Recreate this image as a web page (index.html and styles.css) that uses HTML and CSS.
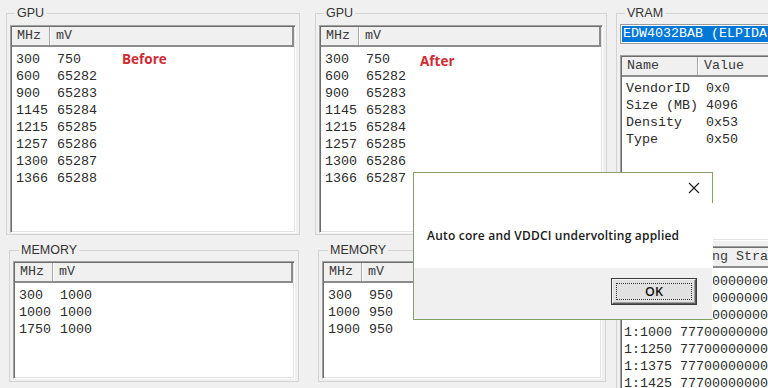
FILE: index.html
```html
<!DOCTYPE html>
<html lang="en">
<head>
<meta charset="utf-8">
<title>Voltage tables</title>
<link rel="stylesheet" href="styles.css">
</head>
<body>
<div class="screen">
  <div class="col col-1">
    <fieldset class="group group-gpu">
      <legend>GPU</legend>
      <div class="list list-gpu">
        <div class="list-head"><span class="hc hc-1">MHz</span><span class="hc">mV</span></div>
        <div class="list-body">
          <div class="row"><span class="c1">300</span><span>750</span><span class="note note-before">Before</span></div>
          <div class="row"><span class="c1">600</span><span>65282</span></div>
          <div class="row"><span class="c1">900</span><span>65283</span></div>
          <div class="row"><span class="c1">1145</span><span>65284</span></div>
          <div class="row"><span class="c1">1215</span><span>65285</span></div>
          <div class="row"><span class="c1">1257</span><span>65286</span></div>
          <div class="row"><span class="c1">1300</span><span>65287</span></div>
          <div class="row"><span class="c1">1366</span><span>65288</span></div>
        </div>
      </div>
    </fieldset>
    <fieldset class="group group-mem">
      <legend>MEMORY</legend>
      <div class="list list-mem">
        <div class="list-head"><span class="hc hc-1">MHz</span><span class="hc">mV</span></div>
        <div class="list-body">
          <div class="row"><span class="c1">300</span><span>1000</span></div>
          <div class="row"><span class="c1">1000</span><span>1000</span></div>
          <div class="row"><span class="c1">1750</span><span>1000</span></div>
        </div>
      </div>
    </fieldset>
  </div>

  <div class="col col-2">
    <fieldset class="group group-gpu">
      <legend>GPU</legend>
      <div class="list list-gpu">
        <div class="list-head"><span class="hc hc-1">MHz</span><span class="hc">mV</span></div>
        <div class="list-body">
          <div class="row"><span class="c1">300</span><span>750</span><span class="note note-after">After</span></div>
          <div class="row"><span class="c1">600</span><span>65282</span></div>
          <div class="row"><span class="c1">900</span><span>65283</span></div>
          <div class="row"><span class="c1">1145</span><span>65283</span></div>
          <div class="row"><span class="c1">1215</span><span>65284</span></div>
          <div class="row"><span class="c1">1257</span><span>65285</span></div>
          <div class="row"><span class="c1">1300</span><span>65286</span></div>
          <div class="row"><span class="c1">1366</span><span>65287</span></div>
        </div>
      </div>
    </fieldset>
    <fieldset class="group group-mem">
      <legend>MEMORY</legend>
      <div class="list list-mem">
        <div class="list-head"><span class="hc hc-1">MHz</span><span class="hc">mV</span></div>
        <div class="list-body">
          <div class="row"><span class="c1">300</span><span>950</span></div>
          <div class="row"><span class="c1">1000</span><span>950</span></div>
          <div class="row"><span class="c1">1900</span><span>950</span></div>
        </div>
      </div>
    </fieldset>
  </div>

  <div class="col col-3">
    <fieldset class="group group-vram">
      <legend>VRAM</legend>
      <div class="combo"><span class="combo-sel">EDW4032BAB (ELPIDA)</span></div>
      <div class="list list-info">
        <div class="list-head"><span class="hc hc-name">Name</span><span class="hc">Value</span></div>
        <div class="list-body">
          <div class="row"><span class="c-name">VendorID</span><span>0x0</span></div>
          <div class="row"><span class="c-name">Size (MB)</span><span>4096</span></div>
          <div class="row"><span class="c-name">Density</span><span>0x53</span></div>
          <div class="row"><span class="c-name">Type</span><span>0x50</span></div>
        </div>
      </div>
      <div class="list list-straps">
        <div class="list-head"><span class="hc hc-freq">MHz</span><span class="hc">Timing Strap</span></div>
        <div class="list-body">
          <div class="row"><span class="c-freq">1:400</span><span>777000000000000022CC1C00</span></div>
          <div class="row"><span class="c-freq">1:800</span><span>777000000000000022CC1C00</span></div>
          <div class="row"><span class="c-freq">1:900</span><span>777000000000000022CC1C00</span></div>
          <div class="row"><span class="c-freq">1:1000</span><span>777000000000000022CC1C00</span></div>
          <div class="row"><span class="c-freq">1:1250</span><span>777000000000000022CC1C00</span></div>
          <div class="row"><span class="c-freq">1:1375</span><span>777000000000000022CC1C00</span></div>
          <div class="row"><span class="c-freq">1:1425</span><span>777000000000000022CC1C00</span></div>
        </div>
      </div>
    </fieldset>
  </div>

  <div class="dialog" role="dialog">
    <div class="dialog-body">
      <button class="dialog-close" type="button" aria-label="Close">
        <svg width="12" height="12" viewBox="0 0 12 12"><path d="M1 1 L11 11 M11 1 L1 11" stroke="#1a1a1a" stroke-width="1.1" fill="none"/></svg>
      </button>
      <p class="dialog-msg">Auto core and VDDCI undervolting applied</p>
    </div>
    <div class="dialog-foot">
      <button class="btn-ok" type="button"><span class="btn-focus">OK</span></button>
    </div>
  </div>
</div>
</body>
</html>
```

FILE: styles.css
```css
* { box-sizing: border-box; }
html, body { margin: 0; padding: 0; }
body {
  background: #f0f0f0;
  width: 768px;
  height: 388px;
  overflow: hidden;
  font-family: "Liberation Sans", Arial, sans-serif;
}
.screen {
  position: relative;
  display: flex;
  align-items: flex-start;
  width: 768px;
  height: 388px;
  overflow: hidden;
}
.col { display: flex; flex-direction: column; flex: none; }
.col-1 { width: 294px; margin-left: 6px; }
.col-2 { width: 292px; margin-left: 15px; }
.col-3 { width: 260px; margin-left: 9px; }

/* group boxes */
.group {
  margin: 0;
  padding: 5px 3px 1px;
  border: 1px solid #d3d3d3;
  min-width: 0;
}
.group legend {
  margin-left: 5px;
  padding: 0 2px;
  font-size: 12.5px;
  line-height: 14px;
  color: #333;
}
.group-gpu { margin-top: 6px; }
.group-mem { margin: 8px 0 0 3px; width: calc(100% - 4px); padding-top: 4px; padding-bottom: 2px; }
.group-mem legend { margin-left: 6px; }
.group-vram { margin-top: 6px; padding-top: 4px; padding-right: 0; border-right: none; }

/* list views */
.list {
  background: #fff;
  padding: 1px;
  border: 1px solid;
  border-color: #a0a0a0 #fff #fff #a0a0a0;
  box-shadow: inset 1px 1px 0 #6d6d6d, inset -1px -1px 0 #e3e3e3;
  overflow: hidden;
  font-family: "Liberation Mono", "Courier New", monospace;
  font-size: 13.33px;
  color: #2a2a2a;
}
.list-gpu { height: 208px; }
.list-mem { height: 118px; }
.list-info { height: 186px; margin-top: 11px; }
.list-straps { height: 160px; margin-top: 5px; }

.list-head {
  display: flex;
  height: 20px;
  background: #f0f0f0;
  border-bottom: 2px solid #8c8c8c;
  border-right: 2px solid #8c8c8c;
  line-height: 18px;
  color: #3a3a3a;
  white-space: pre;
}
.hc { padding-left: 6px; }
.hc-1 { width: 38px; padding-left: 5px; border-right: 1px solid #a8a8a8; box-shadow: 1px 0 0 #fff; }
.hc-name { width: 76px; padding-left: 5px; border-right: 1px solid #a8a8a8; box-shadow: 1px 0 0 #fff; }
.hc-freq { width: 52px; padding-left: 3px; border-right: 1px solid #a8a8a8; box-shadow: 1px 0 0 #fff; }

.list-body { padding: 4px 0 0 4px; }
.list-info .list-body { padding-top: 3px; }
.list-straps .list-body { padding: 5px 0 0 2px; }
.row {
  display: flex;
  height: 17px;
  line-height: 17px;
  white-space: pre;
}
.c1 { width: 41px; flex: none; }
.c-name { width: 80px; flex: none; }
.c-freq { width: 56px; flex: none; }

.note {
  font-family: "Open Sans", "Liberation Sans", sans-serif;
  font-weight: 700;
  font-size: 13.5px;
  color: #cf2b33;
  line-height: 17px;
}
.note-before { margin-left: 41px; }
.note-after { margin-left: 30px; position: relative; top: 2px; }

/* combo box */
.combo {
  height: 20px;
  border: 1px solid #9a9a9a;
  background: #fff;
  padding: 1px 0 0 1px;
  font-family: "Liberation Mono", "Courier New", monospace;
  font-size: 13.33px;
  white-space: pre;
}
.combo-sel {
  display: block;
  height: 16px;
  line-height: 16px;
  background: #0078d7;
  color: #fff;
  padding-left: 1px;
}

/* message dialog */
.dialog {
  position: absolute;
  left: 413px;
  top: 172px;
  width: 300px;
  height: 148px;
  display: flex;
  flex-direction: column;
  background: #fff;
  border: 1px solid #86a068;
  border-right-color: transparent;
}
.dialog::after {
  content: "";
  position: absolute;
  right: -1px;
  top: -1px;
  width: 1px;
  height: 31px;
  background: #86a068;
}
.dialog-body {
  position: relative;
  height: 95px;
  flex: none;
}
.dialog-close {
  position: absolute;
  left: 274px;
  top: 9px;
  width: 12px;
  height: 12px;
  padding: 0;
  border: 0;
  background: none;
  display: block;
}
.dialog-close svg { display: block; }
.dialog-msg {
  margin: 0;
  padding: 54px 0 0 13px;
  font-family: "Open Sans", "Liberation Sans", sans-serif;
  font-size: 12px;
  font-weight: 600;
  letter-spacing: 0.2px;
  line-height: 17px;
  color: #1a1a1a;
}
.dialog-foot {
  flex: 1;
  display: flex;
  justify-content: flex-end;
  align-items: flex-start;
  padding: 11px 16px 0 0;
  background: #f0f0f0;
}
.btn-ok {
  width: 84px;
  height: 25px;
  padding: 3px;
  background: #e1e1e1;
  border: 1px solid;
  border-color: #f4f4f4 #5a5a5a #5a5a5a #f4f4f4;
  box-shadow: 0 0 0 1px #3c3c3c, inset -1px -1px 0 #a0a0a0;
  font-family: "Open Sans", "Liberation Sans", sans-serif;
  font-size: 12.5px;
  font-weight: 600;
  color: #111;
}
.btn-focus {
  display: flex;
  align-items: center;
  justify-content: center;
  height: 100%;
  border: 1px dotted #333;
}
```
